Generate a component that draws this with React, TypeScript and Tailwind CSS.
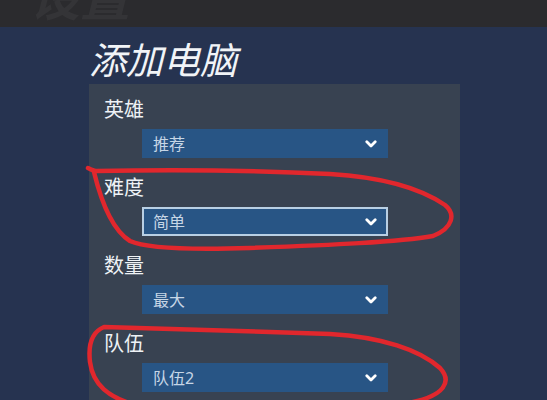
import React from 'react';

const fields = [
  { label: '英雄', value: '推荐', focused: false },
  { label: '难度', value: '简单', focused: true },
  { label: '数量', value: '最大', focused: false },
  { label: '队伍', value: '队伍2', focused: false },
];

function Chevron() {
  return (
    <svg width="12" height="8" viewBox="0 0 12 8" fill="none">
      <path d="M1.8 1.8 L6 6 L10.2 1.8" stroke="#ffffff" strokeWidth="2.8" strokeLinecap="round" strokeLinejoin="round" />
    </svg>
  );
}

function App() {
  return (
    <div
      className="relative w-[547px] h-[400px] overflow-hidden bg-[#263350] flex flex-col"
      style={{ fontFamily: '"Noto Sans", "Noto Sans CJK SC", sans-serif' }}
    >
      {/* dark strip at the top, with a faint heading showing through */}
      <div className="h-[27px] shrink-0 bg-[#2b2b2e] overflow-hidden flex pl-[30px]">
        <span className="-mt-[28px] text-[50px] italic font-bold text-[#343437] leading-none">设置</span>
      </div>

      <div className="flex flex-col pl-[89px]">
        <h1 className="mt-[9px] h-[48px] text-[37px] leading-[48px] italic text-[#f1f4f7]">添加电脑</h1>

        <div className="w-[371px] h-[340px] bg-[#384251] pt-[14px] px-[15px] flex flex-col gap-[18px]">
          {fields.map((f) => (
            <div key={f.label} className="flex flex-col">
              <div className="h-[24px] leading-[24px] text-[20px] text-[#eef2f6]">{f.label}</div>
              <div
                className={
                  f.focused
                    ? 'mt-[7px] ml-[38px] w-[246px] h-[29px] bg-[#285585] border-2 border-[#b8cfe4] flex items-center justify-between pl-[9px] pr-[9px]'
                    : 'mt-[7px] ml-[38px] w-[246px] h-[29px] bg-[#285585] flex items-center justify-between pl-[11px] pr-[11px]'
                }
              >
                <span className="text-[16px] leading-none text-[#c6d6e6]">{f.value}</span>
                <Chevron />
              </div>
            </div>
          ))}
        </div>
      </div>

      {/* red hand-drawn annotations */}
      <svg className="absolute inset-0 pointer-events-none" width="547" height="400" viewBox="0 0 547 400" fill="none">
        <path
          d="M88 168 C92 170 94 171 96 171 C150 170 250 170 330 174 C380 177 420 188 445 205 C456 214 453 228 433 236 C400 242 330 245 250 248 C190 250 145 248 130 241 C114 231 102 205 94 172"
          stroke="#e1272d"
          strokeWidth="4.5"
          strokeLinecap="round"
          strokeLinejoin="round"
        />
        <path
          d="M132 404 C110 397 93 386 90 362 C88 345 92 332 104 327 C150 329 250 331 330 334 C382 337 420 350 440 368 C452 381 446 396 408 403"
          stroke="#e1272d"
          strokeWidth="4.5"
          strokeLinecap="round"
          strokeLinejoin="round"
        />
      </svg>
    </div>
  );
}

export default App;
